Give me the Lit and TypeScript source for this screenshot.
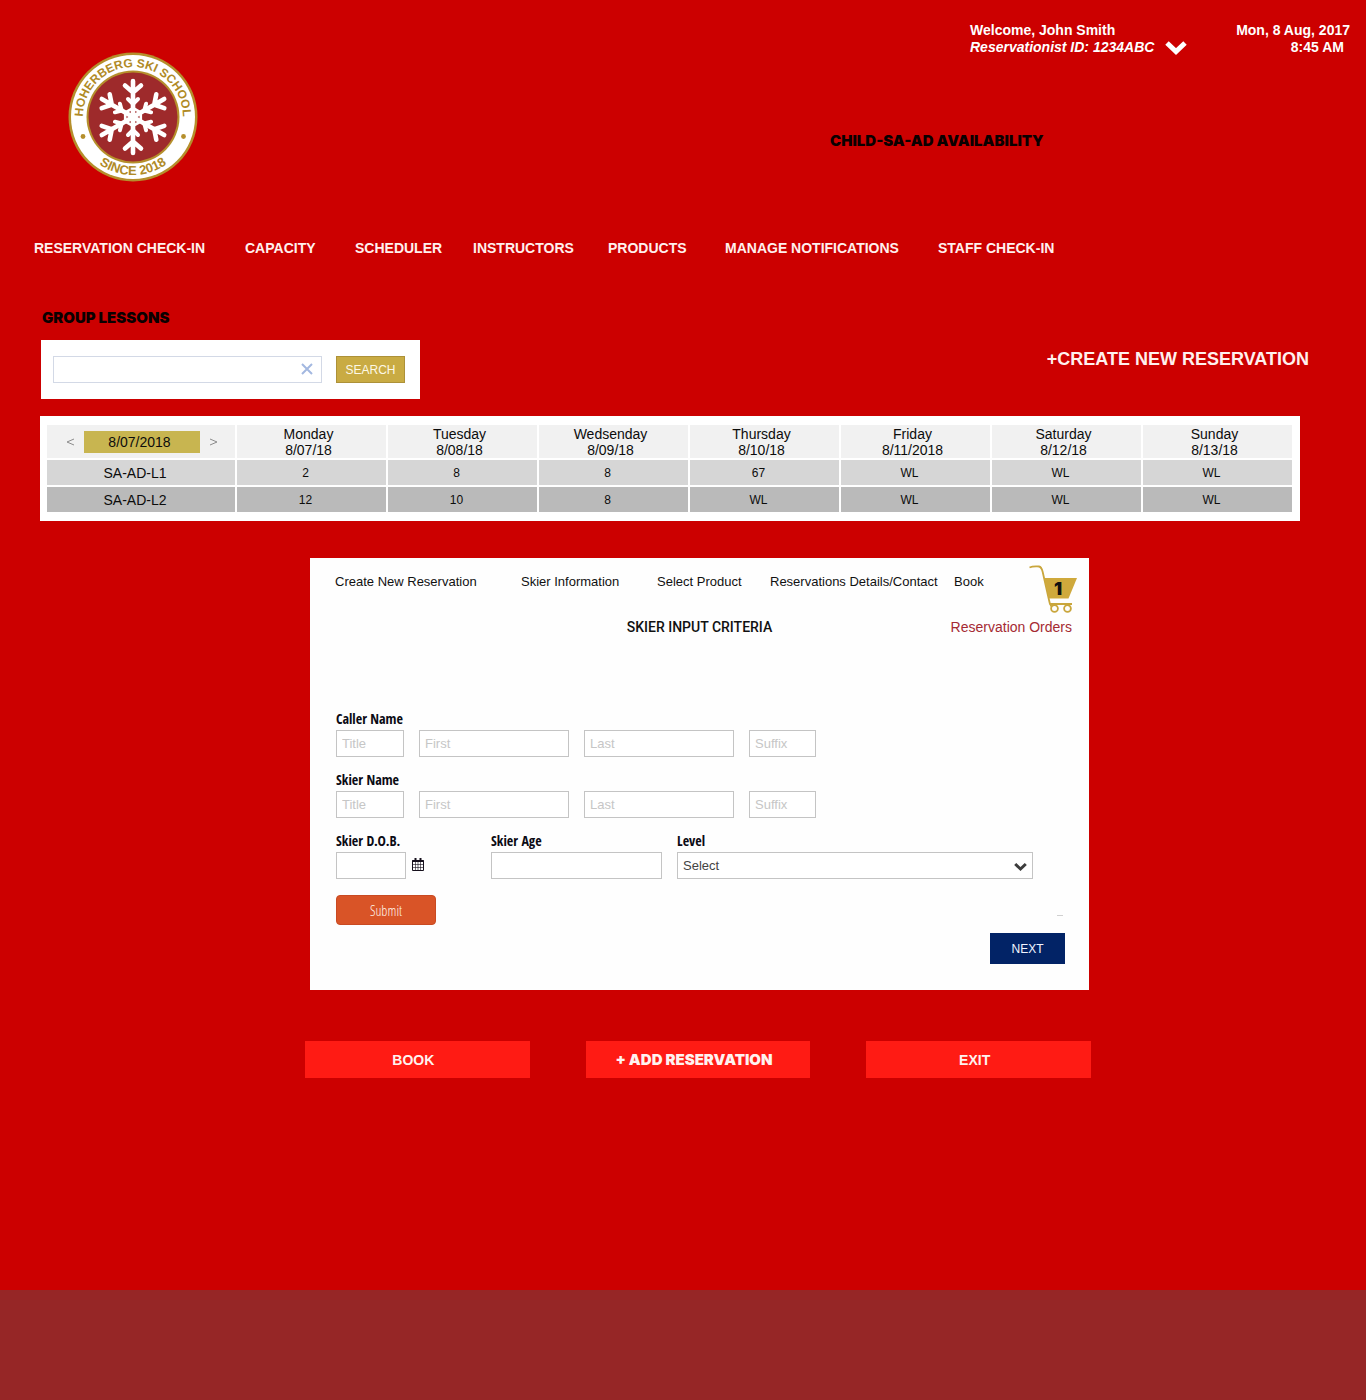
import { LitElement, html, css, svg } from "lit";
import { customElement } from "lit/decorators.js";

interface Day {
  name: string;
  date: string;
}

const NAV = [
  "RESERVATION CHECK-IN",
  "CAPACITY",
  "SCHEDULER",
  "INSTRUCTORS",
  "PRODUCTS",
  "MANAGE NOTIFICATIONS",
  "STAFF CHECK-IN",
];

const STEPS = [
  "Create New Reservation",
  "Skier Information",
  "Select Product",
  "Reservations Details/Contact",
  "Book",
];

const DAYS: Day[] = [
  { name: "Monday", date: "8/07/18" },
  { name: "Tuesday", date: "8/08/18" },
  { name: "Wedsenday", date: "8/09/18" },
  { name: "Thursday", date: "8/10/18" },
  { name: "Friday", date: "8/11/2018" },
  { name: "Saturday", date: "8/12/18" },
  { name: "Sunday", date: "8/13/18" },
];

const LEVELS = [
  { name: "SA-AD-L1", slots: ["2", "8", "8", "67", "WL", "WL", "WL"] },
  { name: "SA-AD-L2", slots: ["12", "10", "8", "WL", "WL", "WL", "WL"] },
];

const shared = css`
  :host {
    display: block;
    font-family: "Liberation Sans", Arial, sans-serif;
  }
  * {
    box-sizing: border-box;
  }
  button,
  input,
  select {
    font-family: inherit;
    margin: 0;
    border-radius: 0;
  }
  button {
    cursor: pointer;
  }
  a {
    color: inherit;
    text-decoration: none;
  }
  svg {
    display: block;
  }
`;

@customElement("school-logo")
export class SchoolLogo extends LitElement {
  static styles = [
    shared,
    css`
      .ring-text {
        fill: #b08a26;
        font-size: 12px;
        font-weight: 700;
      }
      .since {
        font-size: 13px;
      }
    `,
  ];

  render() {
    const arm = (deg: number) => svg`
      <g transform="rotate(${deg})">
        <path d="M0 0V-36M-8-31.500L0-24.500L8-31.500" stroke-width="4.600" />
        <path d="M-5-18L0-13L5-18" stroke-width="4" />
      </g>`;
    return html`
      <svg width="130" height="130" viewBox="-65 -65 130 130" role="img" aria-label="Hoherberg Ski School, since 2018">
        <defs>
          <path id="upper" d="M-49 10A50 50 0 1 1 49 10" />
          <path id="lower" d="M-58 0A58 58 0 0 0 58 0" />
        </defs>
        <circle r="64.500" fill="#b58f2c" />
        <circle r="62" fill="#fff" />
        <circle r="46.500" fill="#b58f2c" />
        <circle r="44.500" fill="#9e2a2b" />
        <text class="ring-text" text-anchor="middle">
          <textPath href="#upper" startOffset="50%">HOHERBERG SKI SCHOOL</textPath>
        </text>
        <text class="ring-text since" text-anchor="middle">
          <textPath href="#lower" startOffset="50%">SINCE 2018</textPath>
        </text>
        <circle cx="-50" cy="19.500" r="2.400" fill="#b58f2c" />
        <circle cx="50.500" cy="19.500" r="2.400" fill="#b58f2c" />
        <g fill="none" stroke="#fff" stroke-linecap="round">
          ${[0, 60, 120, 180, 240, 300].map(arm)}
          <path d="M0-9L7.800-4.500V4.500L0 9L-7.800 4.500V-4.500Z" stroke-width="2.600" />
        </g>
      </svg>
    `;
  }
}

@customElement("page-header")
export class PageHeader extends LitElement {
  static styles = [
    shared,
    css`
      .header {
        display: grid;
        grid-template-columns: 830fr 536fr;
      }
      .logo {
        padding: 52px 68px 0;
      }
      .account {
        display: flex;
        justify-content: space-between;
        padding: 22px 16px 0 140px;
        color: #fff;
        font-size: 14px;
        font-weight: 700;
        line-height: 17px;
        white-space: nowrap;
      }
      .user {
        display: grid;
        grid-template-columns: auto auto;
        column-gap: 11px;
      }
      .id {
        grid-column: 1;
        font-style: italic;
      }
      .toggle {
        grid-column: 2;
        align-self: center;
        border: 0;
        padding: 0;
        background: none;
      }
      .clock {
        text-align: right;
      }
      .time {
        padding-right: 6px;
      }
      .title {
        margin: 75px 0 0;
        font-family: Inter, "Liberation Sans", sans-serif;
        font-size: 15px;
        font-weight: 900;
        line-height: 20px;
        color: #0a0000;
      }
      .nav {
        display: grid;
        grid-template-columns: 211fr 110fr 118fr 135fr 117fr 213fr 428fr;
        padding: 56px 0 0 34px;
        color: #fff0ee;
        font-size: 14px;
        font-weight: 700;
        line-height: 20px;
        white-space: nowrap;
      }
    `,
  ];

  render() {
    return html`
      <header>
        <div class="header">
          <div class="logo"><school-logo></school-logo></div>
          <div>
            <div class="account">
              <div class="user">
                <div>Welcome, John Smith</div>
                <div class="id">Reservationist ID: 1234ABC</div>
                <button class="toggle" type="button" aria-label="Account menu">
                  <svg width="22" height="15" viewBox="0 0 22 15" fill="none" stroke="#fff" stroke-width="5">
                    <path d="M2 3L11 11.500L20 3" />
                  </svg>
                </button>
              </div>
              <div class="clock">
                <div>Mon, 8 Aug, 2017</div>
                <div class="time">8:45 AM</div>
              </div>
            </div>
            <h1 class="title">CHILD-SA-AD AVAILABILITY</h1>
          </div>
        </div>
        <nav class="nav" aria-label="Main">
          ${NAV.map((item) => html`<a href="#">${item}</a>`)}
        </nav>
      </header>
    `;
  }
}

@customElement("lesson-availability")
export class LessonAvailability extends LitElement {
  static styles = [
    shared,
    css`
      .heading {
        margin: 50px 0 12px 42px;
        font-family: Inter, "Liberation Sans", sans-serif;
        font-size: 15px;
        font-weight: 900;
        line-height: 20px;
        color: #0a0000;
      }
      .tools {
        display: flex;
        justify-content: space-between;
        align-items: flex-start;
        padding: 0 57px 0 41px;
      }
      .search {
        display: flex;
        gap: 14px;
        padding: 16px 15px 16px 12px;
        background: #fff;
      }
      .box {
        display: flex;
        align-items: center;
        width: 269px;
        height: 27px;
        padding-right: 8px;
        border: 1px solid #d3d9e6;
      }
      .query {
        flex: 1;
        min-width: 0;
        height: 25px;
        border: 0;
        padding: 0 6px;
        background: none;
        font-size: 13px;
      }
      .clear {
        border: 0;
        padding: 0 0 2px;
        background: none;
      }
      .go {
        width: 69px;
        height: 27px;
        border: 1px solid #ad9138;
        padding: 0;
        background: #c9ab43;
        color: #fdf8e6;
        font-size: 12px;
      }
      .create {
        padding-top: 9px;
        color: #fff0ee;
        font-size: 18px;
        font-weight: 700;
        line-height: 20px;
      }
      .panel {
        margin: 17px 66px 0 40px;
        padding: 7px 6px 7px 5px;
        background: #fff;
      }
      .grid {
        width: 100%;
        table-layout: fixed;
        border-collapse: separate;
        border-spacing: 2px;
        color: #0c0c0c;
        text-align: center;
      }
      .first {
        width: 188px;
      }
      th,
      td {
        height: 25px;
        padding: 0;
        font-weight: 400;
      }
      thead th {
        height: 33px;
        background: #f1f1f1;
        font-size: 14px;
        line-height: 16px;
      }
      thead .day {
        padding-right: 6px;
      }
      .l1 {
        background: #d6d6d6;
      }
      .l2 {
        background: #bababa;
      }
      tbody th {
        padding-right: 12px;
        font-size: 14px;
      }
      tbody td {
        padding-right: 12px;
        font-size: 12px;
      }
      .picker {
        display: flex;
        justify-content: center;
        align-items: center;
        gap: 8px;
        padding-left: 2px;
      }
      .step {
        width: 12px;
        border: 0;
        padding: 0;
        background: none;
        color: #8a8a8a;
      }
      .date {
        width: 116px;
        padding-right: 5px;
        background: #c8b550;
        line-height: 22px;
      }
    `,
  ];

  render() {
    const angle = (d: string) => html`
      <svg width="12" height="10" viewBox="0 0 12 10" fill="none" stroke="#8c8c8c">
        <path d=${d} />
      </svg>
    `;
    return html`
      <section>
        <h2 class="heading">GROUP LESSONS</h2>
        <div class="tools">
          <form class="search" role="search" @submit=${(e: Event) => e.preventDefault()}>
            <div class="box">
              <input class="query" type="text" aria-label="Search group lessons" />
              <button class="clear" type="reset" aria-label="Clear search">
                <svg width="12" height="12" viewBox="0 0 12 12" stroke="#a3b8e0" stroke-width="2">
                  <path d="M1 1L11 11M11 1L1 11" />
                </svg>
              </button>
            </div>
            <button class="go" type="submit">SEARCH</button>
          </form>
          <a class="create" href="#">+CREATE NEW RESERVATION</a>
        </div>
        <div class="panel">
          <table class="grid">
            <thead>
              <tr>
                <th class="first" scope="col">
                  <div class="picker">
                    <button class="step" type="button" aria-label="Previous week">${angle("M10 2L3 5L10 8")}</button>
                    <span class="date">8/07/2018</span>
                    <button class="step" type="button" aria-label="Next week">${angle("M2 2L9 5L2 8")}</button>
                  </div>
                </th>
                ${DAYS.map((d) => html`<th class="day" scope="col">${d.name}<br />${d.date}</th>`)}
              </tr>
            </thead>
            <tbody>
              ${LEVELS.map(
                (level, i) => html`
                  <tr>
                    <th class="l${i + 1}" scope="row">${level.name}</th>
                    ${level.slots.map((s) => html`<td class="l${i + 1}">${s}</td>`)}
                  </tr>
                `
              )}
            </tbody>
          </table>
        </div>
      </section>
    `;
  }
}

@customElement("reservation-form")
export class ReservationForm extends LitElement {
  static styles = [
    shared,
    css`
      .card {
        margin: 37px 277px 0 310px;
        padding: 7px 0 26px;
        background: #fefefe;
        color: #111;
      }
      .top {
        display: flex;
        padding: 0 12px 0 25px;
      }
      .steps {
        flex: 1;
        display: grid;
        grid-template-columns: 186fr 136fr 113fr 184fr 75fr;
        margin: 0;
        padding: 9px 0 0;
        list-style: none;
        font-size: 13px;
        line-height: 16px;
        white-space: nowrap;
      }
      .count {
        font-family: Inter, "Liberation Sans", sans-serif;
        font-size: 18px;
        font-weight: 900;
        fill: #111;
      }
      .titles {
        display: grid;
        grid-template-columns: 1fr auto 1fr;
        margin-top: 4px;
        padding: 0 17px;
        font-size: 14px;
        line-height: 20px;
      }
      .title {
        grid-column: 2;
        margin: 0;
        font-family: Roboto, "Liberation Sans", sans-serif;
        font-size: 14px;
        font-weight: 500;
      }
      .orders {
        justify-self: end;
        color: #a52a33;
      }
      .fields {
        display: grid;
        gap: 13px;
        padding: 72px 56px 0 26px;
      }
      .names {
        display: grid;
        grid-template-columns: 68fr 150fr 150fr 67fr 202fr;
        column-gap: 15px;
        min-width: 0;
        margin: 0;
        padding: 0;
        border: 0;
      }
      .details {
        display: grid;
        grid-template-columns: 140fr 171fr 356fr;
        column-gap: 15px;
      }
      .label {
        display: block;
        padding: 0 0 1px;
        font-family: "Open Sans Condensed", "Liberation Sans Narrow", "Open Sans", sans-serif;
        font-size: 14px;
        font-weight: 700;
        line-height: 20px;
        color: #0b0b14;
      }
      .input {
        display: block;
        width: 100%;
        min-width: 0;
        height: 27px;
        border: 1px solid #c4c4c4;
        padding: 0 5px;
        background: #fff;
        color: #444;
        font-size: 13px;
      }
      .input::placeholder {
        color: #c6c6c6;
        opacity: 1;
      }
      .dob {
        display: flex;
        align-items: center;
        gap: 6px;
      }
      .dob .input {
        width: 50%;
      }
      .calendar {
        border: 0;
        padding: 0 0 2px;
        background: none;
      }
      .level {
        position: relative;
      }
      .level .input {
        appearance: none;
      }
      .level svg {
        position: absolute;
        top: 10px;
        right: 6px;
        pointer-events: none;
      }
      .actions {
        display: flex;
        justify-content: space-between;
        padding: 16px 26px 0;
      }
      .submit {
        width: 100px;
        height: 30px;
        border: 1px solid #c94a22;
        border-radius: 4px;
        padding: 0;
        background: #d95427;
        color: #fff3e8;
        font-family: "Open Sans Condensed Light", "Open Sans Condensed", "Liberation Sans Narrow", "Open Sans", sans-serif;
        font-size: 14px;
        font-weight: 300;
      }
      .tick {
        width: 6px;
        height: 1px;
        margin: 20px 0 0;
        border: 0;
        background: #d0d0d0;
      }
      .forward {
        display: flex;
        justify-content: flex-end;
        padding: 8px 24px 0;
      }
      .next {
        width: 75px;
        height: 31px;
        border: 0;
        padding: 0;
        background: #022366;
        color: #f2f5ff;
        font-size: 12px;
      }
    `,
  ];

  private names(group: string) {
    return html`
      <fieldset class="names">
        <legend class="label">${group}</legend>
        ${["Title", "First", "Last", "Suffix"].map(
          (p) => html`<input class="input" type="text" placeholder=${p} aria-label=${`${group}: ${p}`} />`
        )}
      </fieldset>
    `;
  }

  render() {
    return html`
      <section class="card">
        <div class="top">
          <ol class="steps">
            ${STEPS.map((s) => html`<li><a href="#">${s}</a></li>`)}
          </ol>
          <svg width="48" height="48" viewBox="0 0 48 48" role="img" aria-label="Cart">
            <path
              d="M0.500 2.500C4 1 7 1.500 10 1.500C12.500 2 13 4 13.700 7L20 35C20.500 38.500 21 40 22.500 41.500M20.300 39H43"
              fill="none"
              stroke="#c9a63c"
              stroke-width="1.800"
            />
            <path d="M15 13H48L39.500 33.500H20Z" fill="#cfa93c" />
            <g fill="#fefefe" stroke="#c9a63c" stroke-width="1.800">
              <circle cx="25.500" cy="43.500" r="3.400" />
              <circle cx="38.500" cy="43.500" r="3.400" />
            </g>
            <text class="count" x="29" y="30" text-anchor="middle">1</text>
          </svg>
        </div>
        <div class="titles">
          <h2 class="title">SKIER INPUT CRITERIA</h2>
          <a class="orders" href="#">Reservation Orders</a>
        </div>
        <form @submit=${(e: Event) => e.preventDefault()}>
          <div class="fields">
            ${this.names("Caller Name")} ${this.names("Skier Name")}
            <div class="details">
              <div>
                <label class="label" for="dob">Skier D.O.B.</label>
                <div class="dob">
                  <input class="input" id="dob" type="text" />
                  <button class="calendar" type="button" aria-label="Pick a date">
                    <svg width="12" height="13" viewBox="0 0 12 13" fill="none" stroke="#16101c">
                      <path d="M0.500 2.500H11.500V12.500H0.500Z" />
                      <path d="M0.500 3H11.500" stroke-width="2" />
                      <path d="M3.500 0V3M8.500 0V3" stroke-width="2" />
                      <path d="M1 6.500H11M1 9.500H11M3.500 4V12M6 4V12M8.500 4V12" stroke-width="0.600" />
                    </svg>
                  </button>
                </div>
              </div>
              <div>
                <label class="label" for="age">Skier Age</label>
                <input class="input" id="age" type="text" />
              </div>
              <div>
                <label class="label" for="level">Level</label>
                <div class="level">
                  <select class="input" id="level">
                    <option>Select</option>
                  </select>
                  <svg width="13" height="10" viewBox="0 0 13 10" fill="none" stroke="#3c3c3c" stroke-width="3">
                    <path d="M1.200 2L6.500 7L11.800 2" />
                  </svg>
                </div>
              </div>
            </div>
          </div>
          <div class="actions">
            <button class="submit" type="submit">Submit</button>
            <hr class="tick" />
          </div>
          <div class="forward">
            <button class="next" type="button">NEXT</button>
          </div>
        </form>
      </section>
    `;
  }
}

@customElement("app-root")
export class AppRoot extends LitElement {
  static styles = [
    shared,
    css`
      :host {
        display: flex;
        flex-direction: column;
        min-height: 100vh;
        background: #cc0000;
      }
      .bottom {
        display: flex;
        gap: 56px;
        padding: 51px 275px 60px 305px;
      }
      .action {
        flex: 1;
        height: 37px;
        border: 0;
        padding: 0 8px 0 0;
        background: #ff1b14;
        color: #fff3f0;
        font-size: 14px;
        font-weight: 700;
        white-space: nowrap;
      }
      .heavy {
        font-family: Inter, "Liberation Sans", sans-serif;
        font-size: 15px;
        font-weight: 900;
      }
      .footer {
        height: 110px;
        margin-top: auto;
        background: #962626;
      }
    `,
  ];

  render() {
    return html`
      <page-header></page-header>
      <main>
        <lesson-availability></lesson-availability>
        <reservation-form></reservation-form>
        <div class="bottom">
          <button class="action" type="button">BOOK</button>
          <button class="action heavy" type="button">+ ADD RESERVATION</button>
          <button class="action" type="button">EXIT</button>
        </div>
      </main>
      <footer class="footer"></footer>
    `;
  }
}
